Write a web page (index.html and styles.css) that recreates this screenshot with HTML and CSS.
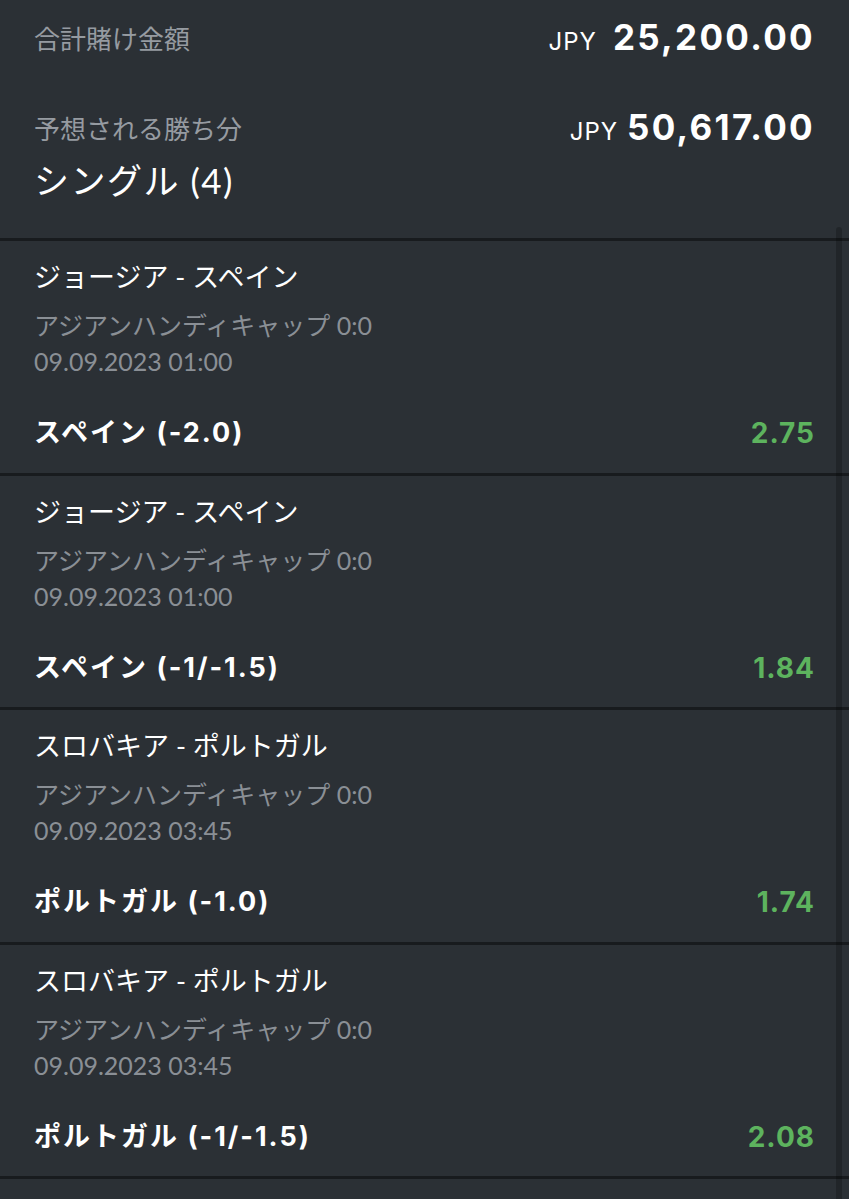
FILE: index.html
```html
<!DOCTYPE html>
<html lang="ja">
<head>
<meta charset="utf-8">
<link rel="stylesheet" href="styles.css">
</head>
<body>
<div class="page">
  <section class="summary">
    <div class="row total">
      <span class="label">合計賭け金額</span>
      <span class="amount"><span class="cur">JPY</span><span class="num">25,200.00</span></span>
    </div>
    <div class="row win">
      <span class="label">予想される勝ち分</span>
      <span class="amount small"><span class="cur">JPY</span><span class="num">50,617.00</span></span>
    </div>
    <h2 class="heading">シングル (4)</h2>
  </section>

  <div class="bet">
    <div class="match">ジョージア - スペイン</div>
    <div class="market">アジアンハンディキャップ 0:0</div>
    <div class="date">09.09.2023 01:00</div>
    <div class="pick"><span class="sel">スペイン (-2.0)</span><span class="odds">2.75</span></div>
  </div>
  <div class="bet">
    <div class="match">ジョージア - スペイン</div>
    <div class="market">アジアンハンディキャップ 0:0</div>
    <div class="date">09.09.2023 01:00</div>
    <div class="pick"><span class="sel">スペイン (-1/-1.5)</span><span class="odds">1.84</span></div>
  </div>
  <div class="bet">
    <div class="match">スロバキア - ポルトガル</div>
    <div class="market">アジアンハンディキャップ 0:0</div>
    <div class="date">09.09.2023 03:45</div>
    <div class="pick"><span class="sel">ポルトガル (-1.0)</span><span class="odds">1.74</span></div>
  </div>
  <div class="bet">
    <div class="match">スロバキア - ポルトガル</div>
    <div class="market">アジアンハンディキャップ 0:0</div>
    <div class="date">09.09.2023 03:45</div>
    <div class="pick"><span class="sel">ポルトガル (-1/-1.5)</span><span class="odds">2.08</span></div>
  </div>
  <div class="bet end"></div>
  <div class="scrollbar"></div>
</div>
</body>
</html>
```

FILE: styles.css
```css
html, body {
  margin: 0;
  padding: 0;
  background: #2b3035;
}
body {
  font-family: "Lato", "Noto Sans CJK JP", sans-serif;
  color: #ffffff;
  width: 849px;
  height: 1199px;
  overflow: hidden;
}
.page {
  position: relative;
  height: 1199px;
}
.summary {
  padding: 0 34px 0 34px;
  height: 238px;
  box-sizing: border-box;
}
.row {
  display: flex;
  justify-content: space-between;
  align-items: center;
}
.total {
  height: 74px;
}
.win {
  margin-top: 28px;
  height: 50px;
}
.label {
  font-size: 26px;
  color: #969ba1;
}
.amount {
  display: flex;
  align-items: baseline;
  gap: 16px;
}
.amount.small {
  gap: 9px;
}
.cur {
  font-family: "Inter", sans-serif;
  font-size: 24px;
  letter-spacing: 1px;
  color: #ffffff;
}
.num {
  font-family: "Inter", sans-serif;
  font-size: 35px;
  font-weight: 700;
  letter-spacing: 2.3px;
}
.heading {
  margin: 8px 0 0;
  font-size: 35px;
  font-weight: 400;
  line-height: 40px;
  letter-spacing: 1.5px;
}
.bet {
  border-top: 3px solid #181b1e;
  padding: 20px 34px 21.5px 34px;
}
.bet.end {
  height: 20px;
  padding: 0;
}
.match {
  font-size: 27px;
  line-height: 32px;
}
.market {
  margin-top: 16px;
  font-size: 25px;
  line-height: 32px;
  color: #8a8f95;
}
.date {
  margin-top: 4px;
  font-size: 25px;
  line-height: 32px;
  color: #8a8f95;
}
.pick {
  margin-top: 38px;
  display: flex;
  justify-content: space-between;
  align-items: center;
  line-height: 36px;
  font-family: "Inter", "Noto Sans CJK JP", sans-serif;
  font-weight: 700;
  font-size: 27px;
  letter-spacing: 2px;
}
.odds {
  color: #5db35e;
  font-size: 28px;
  letter-spacing: 1px;
}
.scrollbar {
  position: absolute;
  top: 227px;
  right: 7px;
  bottom: 0;
  width: 6px;
  border-radius: 3px 3px 0 0;
  background: rgba(0, 0, 0, 0.22);
}
```
